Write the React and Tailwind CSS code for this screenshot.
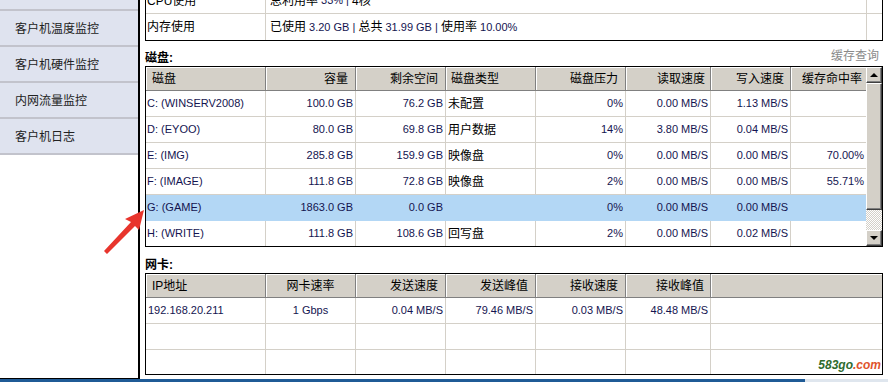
const FONT = "font-['Liberation_Sans','Noto_Sans_CJK_SC',sans-serif]";

const disks = [
  ["C: (WINSERV2008)", "100.0 GB", "76.2 GB", "未配置", "0%", "0.00 MB/S", "1.13 MB/S", ""],
  ["D: (EYOO)", "80.0 GB", "69.8 GB", "用户数据", "14%", "3.80 MB/S", "0.04 MB/S", ""],
  ["E: (IMG)", "285.8 GB", "159.9 GB", "映像盘", "0%", "0.00 MB/S", "0.00 MB/S", "70.00%"],
  ["F: (IMAGE)", "111.8 GB", "72.8 GB", "映像盘", "2%", "0.00 MB/S", "0.00 MB/S", "55.71%"],
  ["G: (GAME)", "1863.0 GB", "0.0 GB", "", "0%", "0.00 MB/S", "0.00 MB/S", ""],
  ["H: (WRITE)", "111.8 GB", "108.6 GB", "回写盘", "2%", "0.00 MB/S", "0.02 MB/S", ""],
];

// width, header alignment, data alignment
const diskCols = [
  { w: "w-[120px]", h: "justify-start pl-[6px]", d: "justify-start pl-[1px] text-[11px]" },
  { w: "w-[90px]", h: "justify-end pr-[7px]", d: "justify-end pr-[2px] text-[11px]" },
  { w: "w-[90px]", h: "justify-end pr-[7px]", d: "justify-end pr-[2px] text-[11px]" },
  { w: "w-[90px]", h: "justify-start pl-[5px]", d: "justify-start pl-[2px] text-[12px] text-black" },
  { w: "w-[90px]", h: "justify-end pr-[7px]", d: "justify-end pr-[2px] text-[11px]" },
  { w: "w-[85px]", h: "justify-end pr-[5px]", d: "justify-end pr-[2px] text-[11px]" },
  { w: "w-[80px]", h: "justify-end pr-[6px]", d: "justify-end pr-[2px] text-[11px]" },
  { w: "flex-1", h: "justify-end pr-[4px]", d: "justify-end pr-[2px] text-[11px]" },
];
const diskHead = ["磁盘", "容量", "剩余空间", "磁盘类型", "磁盘压力", "读取速度", "写入速度", "缓存命中率"];

const netCols = [
  { w: "w-[120px]", h: "justify-start pl-[6px]", d: "justify-start pl-[2px]" },
  { w: "w-[90px]", h: "justify-center", d: "justify-center" },
  { w: "w-[90px]", h: "justify-end pr-[7px]", d: "justify-end pr-[2px]" },
  { w: "w-[90px]", h: "justify-end pr-[7px]", d: "justify-end pr-[2px]" },
  { w: "w-[90px]", h: "justify-end pr-[7px]", d: "justify-end pr-[2px]" },
  { w: "w-[85px]", h: "justify-end pr-[6px]", d: "justify-end pr-[2px]" },
  { w: "flex-1", h: "", d: "" },
];
const netHead = ["IP地址", "网卡速率", "发送速度", "发送峰值", "接收速度", "接收峰值", ""];
const netRows = [
  ["192.168.20.211", "1 Gbps", "0.04 MB/S", "79.46 MB/S", "0.03 MB/S", "48.48 MB/S", ""],
  ["", "", "", "", "", "", ""],
  ["", "", "", "", "", "", ""],
];

function HeadCell({ col, label, last }) {
  return (
    <div
      className={`${col.w} ${col.h} h-full flex items-center bg-[#d4d0c8] shadow-[inset_1px_1px_0_#ffffff] text-[12px] text-black ${
        last ? "" : "border-r border-[#808080]"
      }`}
    >
      {label}
    </div>
  );
}

function SideItem({ label, first }) {
  return (
    <div
      className={`h-[36px] flex items-center pl-[15px] pt-[2px] bg-[#dfe3ef] border-b-2 border-[#c2c3cc] text-[12px] text-[#222] ${
        first ? "-mt-[25px]" : ""
      }`}
    >
      {label}
    </div>
  );
}

function ScrollButton({ down }) {
  return (
    <div className="h-[16px] flex items-center justify-center bg-[#d4d0c8] border border-t-white border-l-white border-r-[#404040] border-b-[#404040] shadow-[inset_-1px_-1px_0_#808080]">
      {down ? (
        <div className="w-0 h-0 border-x-[4px] border-x-transparent border-t-[4px] border-t-black" />
      ) : (
        <div className="w-0 h-0 border-x-[4px] border-x-transparent border-b-[4px] border-b-black" />
      )}
    </div>
  );
}

export default function App() {
  return (
    <div className={`w-[888px] h-[382px] overflow-hidden relative bg-white flex flex-col ${FONT}`}>
      <div className="flex h-[379px]">
        {/* sidebar */}
        <aside className="w-[140px] shrink-0 border-r-2 border-b border-black overflow-hidden">
          <SideItem label="" first />
          <SideItem label="客户机温度监控" />
          <SideItem label="客户机硬件监控" />
          <SideItem label="内网流量监控" />
          <SideItem label="客户机日志" />
        </aside>

        <main className="flex-1 min-w-0 pl-[5px] pr-[5px] flex flex-col">
          {/* system info */}
          <div className="-mt-[13px] border border-black text-[12px]">
            <div className="flex h-[26px] border-b border-[#d4d0c8]">
              <div className="w-[120px] border-r border-[#d4d0c8] flex items-center pl-[1px] text-black">CPU使用</div>
              <div className="flex-1 border-r border-[#d4d0c8] flex items-center pl-[4px] text-black">
                总利用率 <span className="text-[11px] text-[#141450] mx-[3px]">33% |</span> 4核
              </div>
              <div className="w-[15px]" />
            </div>
            <div className="flex h-[26px]">
              <div className="w-[120px] border-r border-[#d4d0c8] flex items-center pl-[1px] text-black">内存使用</div>
              <div className="flex-1 border-r border-[#d4d0c8] flex items-center pl-[4px] text-black whitespace-pre">
                已使用<span className="text-[11px] text-[#141450]"> 3.20 GB | </span>总共
                <span className="text-[11px] text-[#141450]"> 31.99 GB | </span>使用率
                <span className="text-[11px] text-[#141450]"> 10.00%</span>
              </div>
              <div className="w-[15px]" />
            </div>
          </div>

          {/* disk label */}
          <div className="h-[25px] flex justify-between">
            <div className="self-end leading-[16px] text-[12px] font-bold text-black">磁盘:</div>
            <div className="self-start mt-[7px] mr-[4px] leading-[16px] text-[12px] text-[#8a8a8a]">缓存查询</div>
          </div>

          {/* disk table */}
          <div className="flex border border-black">
            <div className="flex-1 min-w-0 flex flex-col">
              <div className="flex h-[24px] border-b border-[#808080]">
                {diskCols.map((c, i) => (
                  <HeadCell key={i} col={c} label={diskHead[i]} last={i === diskCols.length - 1} />
                ))}
              </div>
              {disks.map((row, r) => {
                const sel = r === 4;
                const last = r === disks.length - 1;
                return (
                  <div
                    key={r}
                    className={`flex ${last ? "h-[25px]" : "h-[26px] border-b"} ${
                      sel ? "bg-[#b3d7f5] border-[#b3d7f5]" : "border-[#d4d0c8]"
                    }`}
                  >
                    {row.map((v, i) => (
                      <div
                        key={i}
                        className={`${diskCols[i].w} ${diskCols[i].d} h-full flex items-center whitespace-nowrap text-[#141450] ${
                          i === row.length - 1 ? "" : sel ? "border-r border-[#b3d7f5]" : "border-r border-[#d4d0c8]"
                        }`}
                      >
                        {v}
                      </div>
                    ))}
                  </div>
                );
              })}
            </div>
            {/* scrollbar */}
            <div className="w-[16px] shrink-0 flex flex-col">
              <ScrollButton />
              <div className="h-[127px] bg-[#d4d0c8] border border-t-white border-l-white border-r-[#404040] border-b-[#404040] shadow-[inset_-1px_-1px_0_#808080]" />
              <div className="flex-1 bg-[repeating-conic-gradient(#d4d0c8_0%_25%,#ffffff_0%_50%)] bg-[length:2px_2px]" />
              <ScrollButton down />
            </div>
          </div>

          {/* network label */}
          <div className="h-[26px] flex items-end">
            <div className="leading-[16px] text-[12px] font-bold text-black">网卡:</div>
          </div>

          {/* network table */}
          <div className="relative flex flex-col border border-black">
            <div className="flex h-[24px] border-b border-[#808080]">
              {netCols.map((c, i) => (
                <HeadCell key={i} col={c} label={netHead[i]} last={i === netCols.length - 1} />
              ))}
            </div>
            {netRows.map((row, r) => (
              <div
                key={r}
                className={`flex ${r === netRows.length - 1 ? "h-[24px]" : "h-[26px] border-b border-[#d4d0c8]"}`}
              >
                {row.map((v, i) => (
                  <div
                    key={i}
                    className={`${netCols[i].w} ${netCols[i].d} h-full flex items-center whitespace-nowrap text-[11px] text-[#141450] ${
                      i === row.length - 1 ? "" : "border-r border-[#d4d0c8]"
                    }`}
                  >
                    {v}
                  </div>
                ))}
              </div>
            ))}
            <div className="absolute right-[1px] bottom-[3px] text-[12px] font-bold italic leading-none">
              <span className="text-[#2e6b2e]">583go</span>
              <span className="text-[#e0532c]">.com</span>
            </div>
          </div>
        </main>
      </div>

      <div className="flex h-[3px]">
        <div className="flex-1 bg-[#1f5b96]" />
        <div className="w-[83px] bg-[#dfe6ee]" />
      </div>

      <svg className="absolute left-0 top-0 pointer-events-none" width="888" height="382" viewBox="0 0 888 382">
        <polygon points="144,210 125,219 131,222 104,251 107,254 135,226 139,230" fill="#e8352d" />
      </svg>
    </div>
  );
}
